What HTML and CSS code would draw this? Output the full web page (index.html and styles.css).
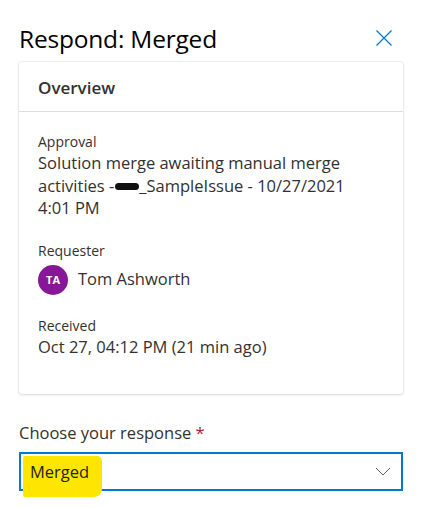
FILE: index.html
```html
<!DOCTYPE html>
<html lang="en">
<head>
<meta charset="utf-8">
<title>Respond: Merged</title>
<link rel="stylesheet" href="styles.css">
</head>
<body>
<div class="panel">
  <header class="header">
    <h1 class="title">Respond: Merged</h1>
    <button class="close" aria-label="Close">
      <svg width="16" height="16" viewBox="0 0 16 16"><path d="M0.5 0.5 L15.5 15.5 M15.5 0.5 L0.5 15.5" stroke="#0078d4" stroke-width="1.3" fill="none"/></svg>
    </button>
  </header>
  <section class="card">
    <div class="card-head">Overview</div>
    <div class="card-body">
      <div class="field">
        <div class="label">Approval</div>
        <div class="value">
          <span class="line">Solution merge awaiting manual merge</span>
          <span class="line"><span>activities -</span><span class="redact"></span><span>_SampleIssue - 10/27/2021</span></span>
          <span class="line">4:01 PM</span>
        </div>
      </div>
      <div class="field">
        <div class="label">Requester</div>
        <div class="person">
          <span class="avatar">TA</span>
          <span class="value">Tom Ashworth</span>
        </div>
      </div>
      <div class="field">
        <div class="label">Received</div>
        <div class="value">Oct 27, 04:12 PM (21 min ago)</div>
      </div>
    </div>
  </section>
  <div class="response">
    <div class="resp-label">Choose your response <span class="req">*</span></div>
    <div class="dropdown">
      <span class="highlight"></span>
      <span class="selected">Merged</span>
      <svg class="chev" width="16" height="9" viewBox="0 0 16 9"><path d="M1 1 L8 8 L15 1" stroke="#605e5c" stroke-width="1" fill="none"/></svg>
    </div>
  </div>
</div>
</body>
</html>
```
FILE: styles.css
```css
* { box-sizing: border-box; }
html, body { margin: 0; padding: 0; background: #ffffff; }
body {
  font-family: "Segoe UI", "Open Sans", "Noto Sans", sans-serif;
  color: #323130;
  width: 422px;
  height: 507px;
  overflow: hidden;
}
.panel {
  padding: 0 19px 0 19px;
  display: flex;
  flex-direction: column;
}
.header {
  display: flex;
  justify-content: space-between;
  align-items: center;
  height: 62px;
  padding-top: 14px;
}
.title {
  margin: 0;
  font-size: 24.5px;
  font-weight: 400;
  color: #000000;
  letter-spacing: -0.2px;
}
.close {
  border: 0;
  background: none;
  padding: 0;
  margin-right: 11px;
  width: 16px;
  height: 16px;
  display: flex;
}
.card {
  border-radius: 3px;
  box-shadow: 0 0 2px rgba(0,0,0,0.18), 0 1px 3px rgba(0,0,0,0.10);
  height: 332px;
  background: #fff;
}
.card-head {
  height: 50px;
  border-bottom: 1px solid #e1dfdd;
  padding: 14px 19px 0;
  font-size: 17px;
  font-weight: 600;
  color: #323130;
}
.card-body {
  padding: 20px 19px 0;
  display: flex;
  flex-direction: column;
  gap: 21px;
}
.label {
  font-size: 14px;
  line-height: 20px;
  color: #323130;
}
.value {
  font-size: 16.5px;
  line-height: 22.5px;
  color: #323130;
}
.line {
  display: flex;
  align-items: center;
  white-space: nowrap;
}
.redact {
  display: inline-block;
  width: 24px;
  height: 7px;
  background: #111;
  border-radius: 4px;
  margin: 2px 0 0 1px;
}
.person {
  display: flex;
  align-items: center;
  gap: 10px;
  margin-top: 4px;
}
.avatar {
  width: 30px;
  height: 30px;
  border-radius: 50%;
  background: #881798;
  color: #fff;
  font-size: 11px;
  font-weight: 700;
  display: flex;
  align-items: center;
  justify-content: center;
}
.response {
  margin-top: 28px;
}
.resp-label {
  font-size: 16.5px;
  line-height: 22px;
  color: #323130;
  padding-bottom: 8px;
}
.req { color: #a4262c; }
.dropdown {
  position: relative;
  height: 39px;
  border: 2px solid #0078d4;
  display: flex;
  align-items: center;
  justify-content: space-between;
  padding: 0 10px 0 9px;
}
.highlight {
  position: absolute;
  left: 2px;
  top: 2px;
  width: 79px;
  height: 41px;
  background: #ffe600;
  border-radius: 2px 5px 8px 2px;
}
.selected {
  position: relative;
  font-size: 16.5px;
  color: #201f1e;
}
.chev { position: relative; }
```
